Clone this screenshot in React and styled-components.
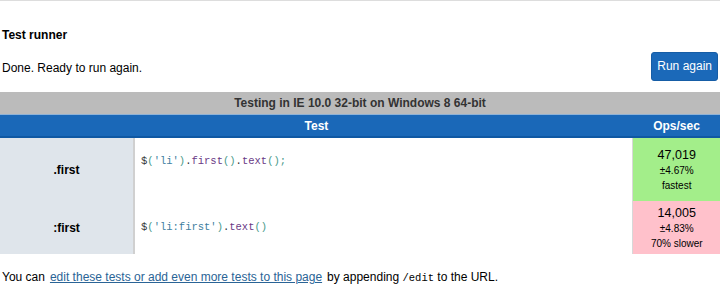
import styled, { createGlobalStyle } from "styled-components";

const GlobalStyle = createGlobalStyle`
  html, body {
    margin: 0;
    padding: 0;
    background: #ffffff;
  }
  body {
    font-family: "Liberation Sans", Arial, sans-serif;
    font-size: 12px;
    color: #000;
  }
`;

const Page = styled.div`
  border-top: 1px solid #dddddd;
  width: 720px;
  height: 284px;
  overflow: hidden;
`;

const Heading = styled.h2`
  margin: 27px 0 0 2px;
  font-size: 12px;
  line-height: 14px;
  font-weight: 700;
`;

const StatusRow = styled.div`
  display: flex;
  align-items: center;
  justify-content: space-between;
  margin-top: 10px;
  padding: 0 2px;
`;

const StatusText = styled.p`
  margin: 0;
  font-size: 12px;
  line-height: 14px;
  padding-top: 2px;
`;

const RunButton = styled.button`
  height: 29px;
  padding: 0 5px 1px;
  background: #1b69b9;
  border: 1px solid #165da6;
  border-radius: 3px;
  color: #ffffff;
  font-family: "Liberation Sans", Arial, sans-serif;
  font-size: 12px;
  cursor: pointer;
`;

const Table = styled.table`
  margin-top: 11px;
  width: 720px;
  border-collapse: collapse;
  table-layout: fixed;
`;

const Col = styled.col`
  width: ${(p) => p.$w};
`;

const Caption = styled.th`
  height: 22px;
  padding: 0;
  background: #bbbbbb;
  color: #333333;
  font-size: 12px;
  font-weight: 700;
  border-bottom: 1px solid #8fb2d6;
`;

const HeadCell = styled.th`
  height: 21px;
  padding: 0;
  background: #1a68b8;
  color: #ffffff;
  font-size: 12px;
  font-weight: 700;
  border-bottom: 2px solid #0f58a3;
`;

const Row = styled.tr`
  height: ${(p) => p.$height}px;
  & + & td {
    border-top: 2px solid #d4d4d4;
  }
`;

const Label = styled.td`
  background: #dfe5eb;
  border-right: 2px solid #d0d0d0;
  text-align: center;
  font-weight: 700;
  font-size: 12px;
  padding: 0;
`;

const CodeCell = styled.td`
  padding: 0 6px;
  vertical-align: middle;
`;

const Code = styled.pre`
  margin: 0;
  font-family: "Liberation Mono", "Courier New", monospace;
  font-size: 10.5px;
  line-height: 17px;
  color: #333;
`;

const Tok = styled.span`
  color: ${(p) => p.$c};
`;

const Ops = styled.td`
  padding: 0;
  background: ${(p) => p.$bg};
  border-left: 1px solid #d8d8d8;
  text-align: center;
  vertical-align: middle;
`;

const OpsValue = styled.div`
  font-size: 12.5px;
  line-height: 16px;
`;

const OpsSmall = styled.div`
  font-size: 10px;
  line-height: 15px;
`;

const Footer = styled.p`
  margin: 16px 0 0 2px;
  font-size: 12px;
  line-height: 14px;
`;

const FooterLink = styled.a`
  color: #2a6496;
  text-decoration: underline;
  margin: 0 5px;
`;

const Mono = styled.code`
  font-family: "Liberation Mono", "Courier New", monospace;
  font-size: 10.5px;
`;

const C = {
  pln: "#333333",
  str: "#3f7f9f",
  fn: "#6a3a86",
  pun: "#4a9a8a",
};

const rows = [
  {
    name: ".first",
    height: 64,
    code: [
      ["$", C.pln],
      ["(", C.pun],
      ["'li'", C.str],
      [")", C.pun],
      [".", C.pln],
      ["first", C.fn],
      ["()", C.pun],
      [".", C.pln],
      ["text", C.fn],
      ["();", C.pun],
      ["\n ", C.pln],
    ],
    ops: "47,019",
    rme: "±4.67%",
    note: "fastest",
    bg: "#a3ee8a",
  },
  {
    name: ":first",
    height: 53,
    code: [
      ["$", C.pln],
      ["(", C.pun],
      ["'li:first'", C.str],
      [")", C.pun],
      [".", C.pln],
      ["text", C.fn],
      ["()", C.pun],
    ],
    ops: "14,005",
    rme: "±4.83%",
    note: "70% slower",
    bg: "#ffc1cb",
  },
];

export default function App() {
  return (
    <Page>
      <GlobalStyle />
      <Heading>Test runner</Heading>
      <StatusRow>
        <StatusText>Done. Ready to run again.</StatusText>
        <RunButton type="button">Run again</RunButton>
      </StatusRow>
      <Table>
        <colgroup>
          <Col $w="134px" />
          <Col $w="auto" />
          <Col $w="87px" />
        </colgroup>
        <thead>
          <tr>
            <Caption colSpan={3}>
              Testing in IE 10.0 32-bit on Windows 8 64-bit
            </Caption>
          </tr>
          <tr>
            <HeadCell colSpan={2}>Test</HeadCell>
            <HeadCell>Ops/sec</HeadCell>
          </tr>
        </thead>
        <tbody>
          {rows.map((r) => (
            <Row key={r.name} $height={r.height}>
              <Label>{r.name}</Label>
              <CodeCell>
                <Code>
                  {r.code.map(([t, c], i) => (
                    <Tok key={i} $c={c}>
                      {t}
                    </Tok>
                  ))}
                </Code>
              </CodeCell>
              <Ops $bg={r.bg}>
                <OpsValue>{r.ops}</OpsValue>
                <OpsSmall>{r.rme}</OpsSmall>
                <OpsSmall>{r.note}</OpsSmall>
              </Ops>
            </Row>
          ))}
        </tbody>
      </Table>
      <Footer>
        You can
        <FooterLink href="#">
          edit these tests or add even more tests to this page
        </FooterLink>
        by appending <Mono>/edit</Mono> to the URL.
      </Footer>
    </Page>
  );
}
